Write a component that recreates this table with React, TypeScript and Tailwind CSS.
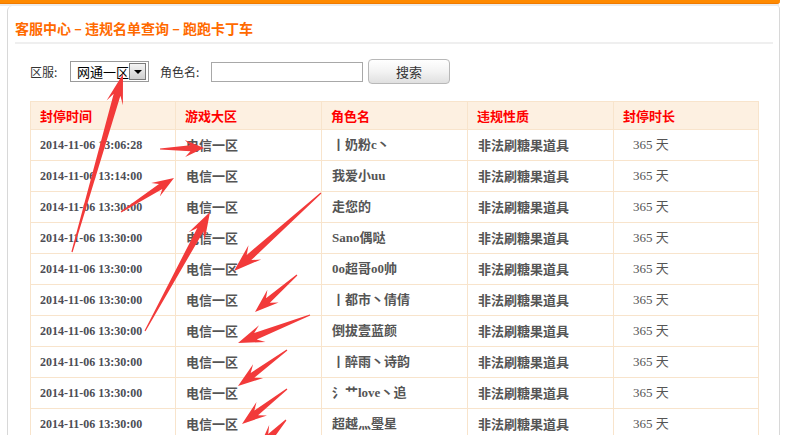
import React from "react";

type Arrow = { t: [number, number]; h: [number, number]; head?: number; w?: number; s?: number };

const arrows: Arrow[] = [
  { t: [72, 252], h: [123, 74], head: 30, w: 17, s: 7 },
  { t: [160, 149], h: [204, 148], head: 19, w: 17, s: 6 },
  { t: [121, 212], h: [174, 178], head: 22, w: 16, s: 6 },
  { t: [145, 331], h: [210, 212], head: 28, w: 18, s: 7 },
  { t: [321, 193], h: [234, 271], head: 28, w: 19, s: 7 },
  { t: [297, 275], h: [255, 312], head: 24, w: 17, s: 6 },
  { t: [310, 315], h: [238, 343], head: 26, w: 18, s: 7 },
  { t: [287, 350], h: [238, 386], head: 25, w: 17, s: 6 },
  { t: [287, 389], h: [242, 424], head: 25, w: 17, s: 6 },
  { t: [286, 420], h: [258, 450], head: 26, w: 18, s: 7 },
];

function pts(a: Arrow) {
  const [x1, y1] = a.t;
  const [x2, y2] = a.h;
  const head = a.head ?? 22;
  const w = a.w ?? 14;
  const s = a.s ?? 5;
  const dx = x2 - x1;
  const dy = y2 - y1;
  const L = Math.hypot(dx, dy);
  const ux = dx / L;
  const uy = dy / L;
  const nx = -uy;
  const ny = ux;
  const bx = x2 - ux * head;
  const by = y2 - uy * head;
  const jx = x2 - ux * head * 0.72;
  const jy = y2 - uy * head * 0.72;
  const p: [number, number][] = [
    [x1 + nx * 0.6, y1 + ny * 0.6],
    [jx + (nx * s) / 2, jy + (ny * s) / 2],
    [bx + (nx * w) / 2, by + (ny * w) / 2],
    [x2, y2],
    [bx - (nx * w) / 2, by - (ny * w) / 2],
    [jx - (nx * s) / 2, jy - (ny * s) / 2],
    [x1 - nx * 0.6, y1 - ny * 0.6],
  ];
  return p.map((q) => `${q[0].toFixed(1)},${q[1].toFixed(1)}`).join(" ");
}

const names = [
  "丨奶粉c丶",
  "我爱小uu",
  "走您的",
  "Sano偶哒",
  "0o超哥o0帅",
  "丨都市丶倩倩",
  "倒拔壹蓝颜",
  "丨醉雨丶诗韵",
  "氵艹love丶追",
  "超越灬璺星",
];
const times = [
  "2014-11-06 13:06:28",
  "2014-11-06 13:14:00",
  "2014-11-06 13:30:00",
  "2014-11-06 13:30:00",
  "2014-11-06 13:30:00",
  "2014-11-06 13:30:00",
  "2014-11-06 13:30:00",
  "2014-11-06 13:30:00",
  "2014-11-06 13:30:00",
  "2014-11-06 13:30:00",
];

const serif = "font-['Liberation_Serif','Noto_Sans_CJK_SC',serif]";
const sans = "font-['Noto_Sans_CJK_SC','Liberation_Sans',sans-serif]";

export default function App() {
  return (
    <div className="relative w-[792px] h-[435px] overflow-hidden bg-white">
      <div className="w-[780px] h-[4px] bg-[#ff8a00] rounded-br-[3px] border-b border-[#f07a00]" />
      <div className="w-[779px] h-[2px] bg-[#ececec]" />
      <div className="ml-[7px] w-[773px] h-[429px] border-l border-r border-[#d8d8d8] rounded-tl-[5px] rounded-tr-[3px]">
        <div className={`pl-[7px] pt-[12px] h-[36px] text-[14px] leading-[20px] font-bold text-[#ff6a00] ${sans}`}>
          客服中心 – 违规名单查询 – 跑跑卡丁车
        </div>
        <div className="ml-[7px] w-[758px] h-[2px] bg-[#efefef]" />
        <div className={`mt-[15px] h-[25px] flex items-center pl-[22px] text-[12px] text-[#333] ${sans}`}>
          <span className="w-[40px]">区服:</span>
          <div className="w-[79px] h-[21px] border border-[#9a9a9a] flex items-center pl-[6px] pr-[2px] justify-between bg-white">
            <span className="text-[13px] text-black leading-none">网通一区</span>
            <div className="w-[17px] h-[17px] border border-[#7a7a7a] bg-gradient-to-b from-[#f4f4f4] to-[#cfcfcf] flex items-center justify-center">
              <div className="w-0 h-0 border-l-[4px] border-r-[4px] border-t-[4px] border-l-transparent border-r-transparent border-t-black" />
            </div>
          </div>
          <span className="ml-[11px] w-[51px]">角色名:</span>
          <div className="w-[152px] h-[20px] border border-[#a8a8a8] bg-white" />
          <div className="ml-[5px] w-[82px] h-[25px] rounded-[4px] border border-[#b8b8b8] bg-gradient-to-b from-[#ffffff] via-[#f3f3f3] to-[#e0e0e0] flex items-center justify-center text-[13px] text-[#333]">
            搜索
          </div>
        </div>
        <div className="mt-[17px] ml-[22px] w-[729px] border-l border-t border-[#f8e4cc]">
          <div className="grid grid-cols-[145px_146px_146px_146px_145px] bg-[#fdf0e1]">
            {["封停时间", "游戏大区", "角色名", "违规性质", "封停时长"].map((h) => (
              <div
                key={h}
                className={`h-[28px] border-r border-b border-[#f8e4cc] flex items-center pl-[9px] text-[13px] font-bold text-[#ff0000] ${sans}`}
              >
                {h}
              </div>
            ))}
          </div>
          {times.map((t, i) => (
            <div key={i} className="grid grid-cols-[145px_146px_146px_146px_145px] bg-white">
              <div className={`h-[31px] border-r border-b border-[#f8e4cc] flex items-center pl-[9px] text-[12px] font-bold text-[#4d4d55] ${serif}`}>
                {t}
              </div>
              <div className={`h-[31px] border-r border-b border-[#f8e4cc] flex items-center pl-[10px] text-[13px] font-bold text-[#555] ${sans}`}>
                电信一区
              </div>
              <div className={`h-[31px] border-r border-b border-[#f8e4cc] flex items-center pl-[10px] text-[13px] font-bold text-[#555] ${serif}`}>
                {names[i]}
              </div>
              <div className={`h-[31px] border-r border-b border-[#f8e4cc] flex items-center pl-[10px] text-[13px] font-bold text-[#555] ${sans}`}>
                非法刷糖果道具
              </div>
              <div className={`h-[31px] border-r border-b border-[#f8e4cc] flex items-center pl-[19px] text-[13px] text-[#555] ${serif}`}>
                365 天
              </div>
            </div>
          ))}
        </div>
      </div>
      <svg className="absolute inset-0 pointer-events-none" width="792" height="435" viewBox="0 0 792 435">
        {arrows.map((a, i) => (
          <polygon key={i} points={pts(a)} fill="#f23a3a" />
        ))}
      </svg>
    </div>
  );
}
